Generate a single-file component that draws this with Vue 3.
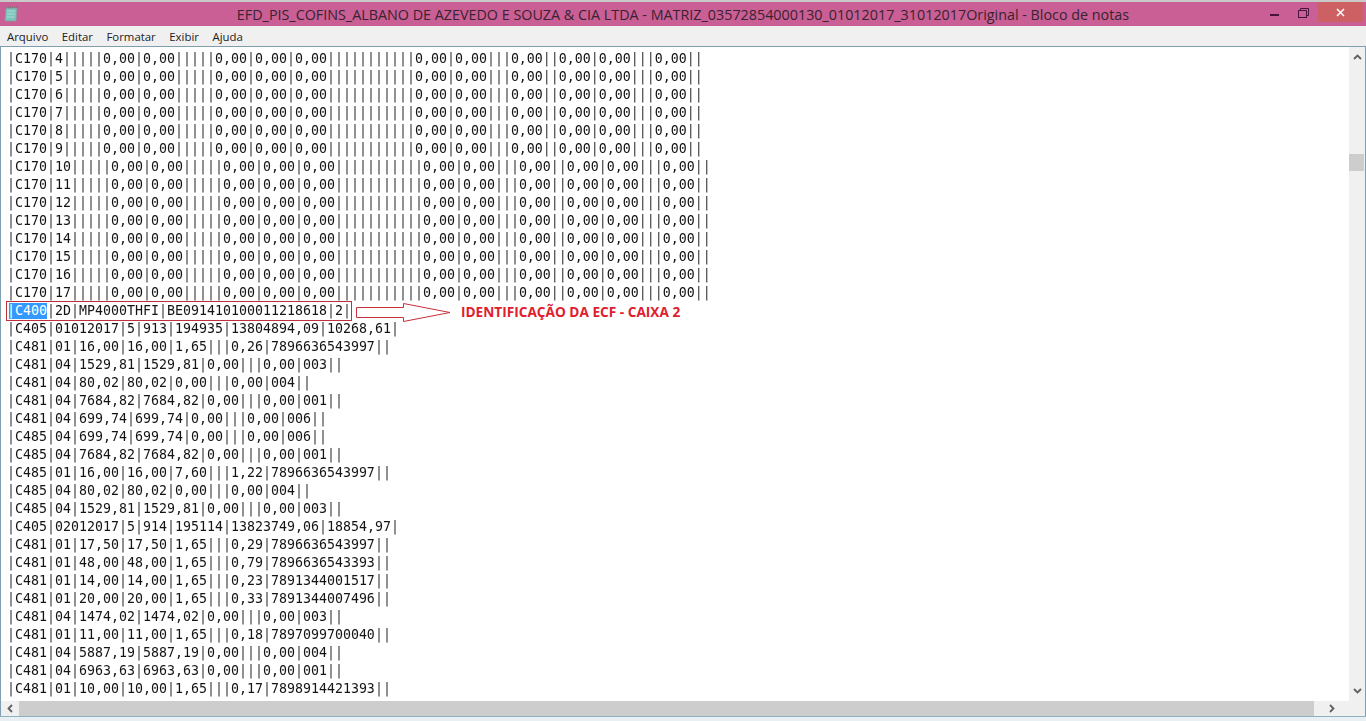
<script setup>
const c170 = (n) => `|C170|${n}|||||0,00|0,00|||||0,00|0,00|0,00|||||||||||0,00|0,00|||0,00||0,00|0,00|||0,00||`
const rows = [
  ...[4, 5, 6, 7, 8, 9, 10, 11, 12, 13, 14, 15, 16, 17].map(c170),
  'SEL',
  '|C405|01012017|5|913|194935|13804894,09|10268,61|',
  '|C481|01|16,00|16,00|1,65|||0,26|7896636543997||',
  '|C481|04|1529,81|1529,81|0,00|||0,00|003||',
  '|C481|04|80,02|80,02|0,00|||0,00|004||',
  '|C481|04|7684,82|7684,82|0,00|||0,00|001||',
  '|C481|04|699,74|699,74|0,00|||0,00|006||',
  '|C485|04|699,74|699,74|0,00|||0,00|006||',
  '|C485|04|7684,82|7684,82|0,00|||0,00|001||',
  '|C485|01|16,00|16,00|7,60|||1,22|7896636543997||',
  '|C485|04|80,02|80,02|0,00|||0,00|004||',
  '|C485|04|1529,81|1529,81|0,00|||0,00|003||',
  '|C405|02012017|5|914|195114|13823749,06|18854,97|',
  '|C481|01|17,50|17,50|1,65|||0,29|7896636543997||',
  '|C481|01|48,00|48,00|1,65|||0,79|7896636543393||',
  '|C481|01|14,00|14,00|1,65|||0,23|7891344001517||',
  '|C481|01|20,00|20,00|1,65|||0,33|7891344007496||',
  '|C481|04|1474,02|1474,02|0,00|||0,00|003||',
  '|C481|01|11,00|11,00|1,65|||0,18|7897099700040||',
  '|C481|04|5887,19|5887,19|0,00|||0,00|004||',
  '|C481|04|6963,63|6963,63|0,00|||0,00|001||',
  '|C481|01|10,00|10,00|1,65|||0,17|7898914421393||',
]
const parts = (s) => s.split(/(\|)/).filter(Boolean)
const menus = ['Arquivo', 'Editar', 'Formatar', 'Exibir', 'Ajuda']
</script>

<template>
  <div class="window">
    <header class="titlebar">
      <svg class="app-icon" viewBox="0 0 16 16" width="16" height="16">
        <path d="M3 2h11l-1 13H2z" fill="#7cc4bc" stroke="#8a9a9c" stroke-width="0.8" />
        <path d="M4 5h8M4 8h8M3.600 11h8" stroke="#a9dcd5" stroke-width="1" />
        <path d="M3 1.500h11" stroke="#777" stroke-width="1.600" stroke-dasharray="1 1" />
      </svg>
      <div class="title">EFD_PIS_COFINS_ALBANO DE AZEVEDO E SOUZA &amp; CIA LTDA - MATRIZ_03572854000130_01012017_31012017Original - Bloco de notas</div>
      <div class="controls">
        <svg class="ctl-min" viewBox="0 0 9 2" width="9" height="2"><rect width="9" height="2" fill="#46143f" /></svg>
        <svg class="ctl-max" viewBox="0 0 11 10" width="11" height="10">
          <path d="M2.500 2.500V.5h8v7h-2" fill="none" stroke="#46143f" />
          <rect x="0.500" y="2.500" width="8" height="7" fill="none" stroke="#46143f" />
        </svg>
        <div class="ctl-close">
          <svg viewBox="0 0 9 9" width="9" height="9"><path d="M1 1l7 7M8 1l-7 7" stroke="#fff" stroke-width="1.500" /></svg>
        </div>
      </div>
    </header>

    <nav class="menu">
      <span v-for="m in menus" :key="m">{{ m }}</span>
    </nav>

    <main class="editor">
      <div class="text">
        <div class="rows">
          <div v-for="(r, i) in rows" :key="i" class="row">
            <template v-if="r === 'SEL'">
              <span class="sel">|C400</span><span class="gray"><span v-for="(p, j) in parts('|2D|MP4000THFI|BE091410100011218618|2|')" :key="j" :class="{ pipe: p === '|' }">{{ p }}</span></span>
            </template>
            <span v-else class="gray">
              <span v-for="(p, j) in parts(r)" :key="j" :class="{ pipe: p === '|' }">{{ p }}</span>
            </span>
          </div>
        </div>

        <div class="mark-box"></div>
        <svg class="mark-arrow" viewBox="0 0 96 22" width="96" height="22">
          <path d="M.5 5.500H47.500V1.500L94 10.500 47.500 19.500V15.500H.5z" fill="#fff" stroke="#c8303c" stroke-width="1" />
        </svg>
        <div class="mark-label">IDENTIFICAÇÃO DA ECF - CAIXA 2</div>
      </div>

      <div class="vbar">
        <svg viewBox="0 0 9 6" width="9" height="6"><path d="M1 5l3.500-3.500L8 5" fill="none" stroke="#606060" stroke-width="1.800" /></svg>
        <div class="vtrack"><div class="vthumb"></div></div>
        <svg viewBox="0 0 9 6" width="9" height="6"><path d="M1 1l3.500 3.500L8 1" fill="none" stroke="#606060" stroke-width="1.800" /></svg>
      </div>
      <div class="hbar">
        <div class="harrow">
          <svg viewBox="0 0 6 9" width="6" height="9"><path d="M5 1L1.500 4.500 5 8" fill="none" stroke="#606060" stroke-width="1.800" /></svg>
        </div>
        <div class="hthumb"></div>
        <div class="harrow harrow-r">
          <svg viewBox="0 0 6 9" width="6" height="9"><path d="M1 1l3.500 3.500L1 8" fill="none" stroke="#606060" stroke-width="1.800" /></svg>
        </div>
      </div>
      <div class="corner"></div>
    </main>
    <footer class="bottom"></footer>
  </div>
</template>

<style>
html, body { margin: 0; padding: 0; background: #fff; overflow: hidden; }
</style>

<style scoped>
.window {
  width: 1366px;
  height: 721px;
  display: flex;
  flex-direction: column;
  overflow: hidden;
  background: #f0f0f0;
}
.titlebar {
  height: 24px;
  flex: none;
  border-top: 2px solid #c9c9c9;
  background: #c95f94;
  display: flex;
  align-items: center;
  position: relative;
  padding-left: 3px;
}
.app-icon { flex: none; }
.title {
  flex: 1;
  text-align: center;
  font-family: "Open Sans", "Liberation Sans", sans-serif;
  font-size: 14.33px;
  color: #3a2230;
  white-space: nowrap;
  margin-left: -19px;
}
.controls {
  position: absolute;
  right: 3px;
  top: 0;
  height: 20px;
  display: flex;
  align-items: center;
}
.ctl-min { position: absolute; right: 84px; top: 12px; }
.ctl-max { position: absolute; right: 54px; top: 6px; }
.ctl-close {
  width: 45px;
  height: 20px;
  background: #cd6063;
  display: flex;
  align-items: center;
  justify-content: center;
}
.menu {
  height: 20px;
  flex: none;
  display: flex;
  align-items: center;
  gap: 13.500px;
  padding-left: 7px;
  background: #f0f0f0;
  font-family: "Open Sans", "Liberation Sans", sans-serif;
  font-size: 11.400px;
  color: #222;
}
.editor {
  flex: 1;
  min-height: 0;
  display: grid;
  grid-template-columns: 1fr 16px;
  grid-template-rows: 1fr 15px;
  border: 1px solid #7f9fb0;
  border-bottom: none;
  background: #fff;
}
.text {
  position: relative;
  overflow: hidden;
  padding: 2px 0 0 6px;
  font-family: "DejaVu Sans Mono", monospace;
  font-size: 13.29px;
  line-height: 18px;
  color: #141414;
  white-space: pre;
}
.rows { position: relative; top: 1px; }
.row { height: 18px; display: flex; }
.gray { display: block; filter: grayscale(1); }
.pipe { color: #3a3a30; }
.sel {
  background: linear-gradient(90deg, transparent 2px, #3399ff 2px);
  color: #fff;
  display: block;
  line-height: 16px;
  height: 16px;
  margin-top: 1px;
}
.mark-box {
  position: absolute;
  left: 5px;
  top: 254px;
  width: 344px;
  height: 18px;
  border: 1px solid #c0303c;
}
.mark-arrow {
  position: absolute;
  left: 355px;
  top: 255px;
}
.mark-label {
  position: absolute;
  left: 460px;
  top: 256px;
  font-family: "Open Sans", "Liberation Sans", sans-serif;
  font-weight: 700;
  font-size: 13.650px;
  line-height: 18px;
  color: #e0202e;
}
.vbar {
  grid-column: 2;
  grid-row: 1;
  background: #f0f0f0;
  display: flex;
  flex-direction: column;
  align-items: center;
  padding: 7px 0;
}
.vtrack { flex: 1; width: 100%; position: relative; }
.vthumb {
  position: absolute;
  top: 94px;
  left: 0;
  width: 15px;
  height: 17px;
  background: #cdcdcd;
}
.hbar {
  grid-column: 1;
  grid-row: 2;
  background: #f0f0f0;
  display: flex;
  align-items: center;
}
.harrow {
  width: 18px;
  display: flex;
  justify-content: center;
  flex: none;
}
.hthumb {
  width: 1295px;
  height: 15px;
  background: #cdcdcd;
  flex: none;
}
.harrow-r { flex: 1; justify-content: center; }
.corner { grid-column: 2; grid-row: 2; background: #f0f0f0; }
.bottom {
  height: 5px;
  flex: none;
  background: #e9f0f4;
  border-top: 1px solid #8fb0c0;
  box-sizing: border-box;
}
</style>
